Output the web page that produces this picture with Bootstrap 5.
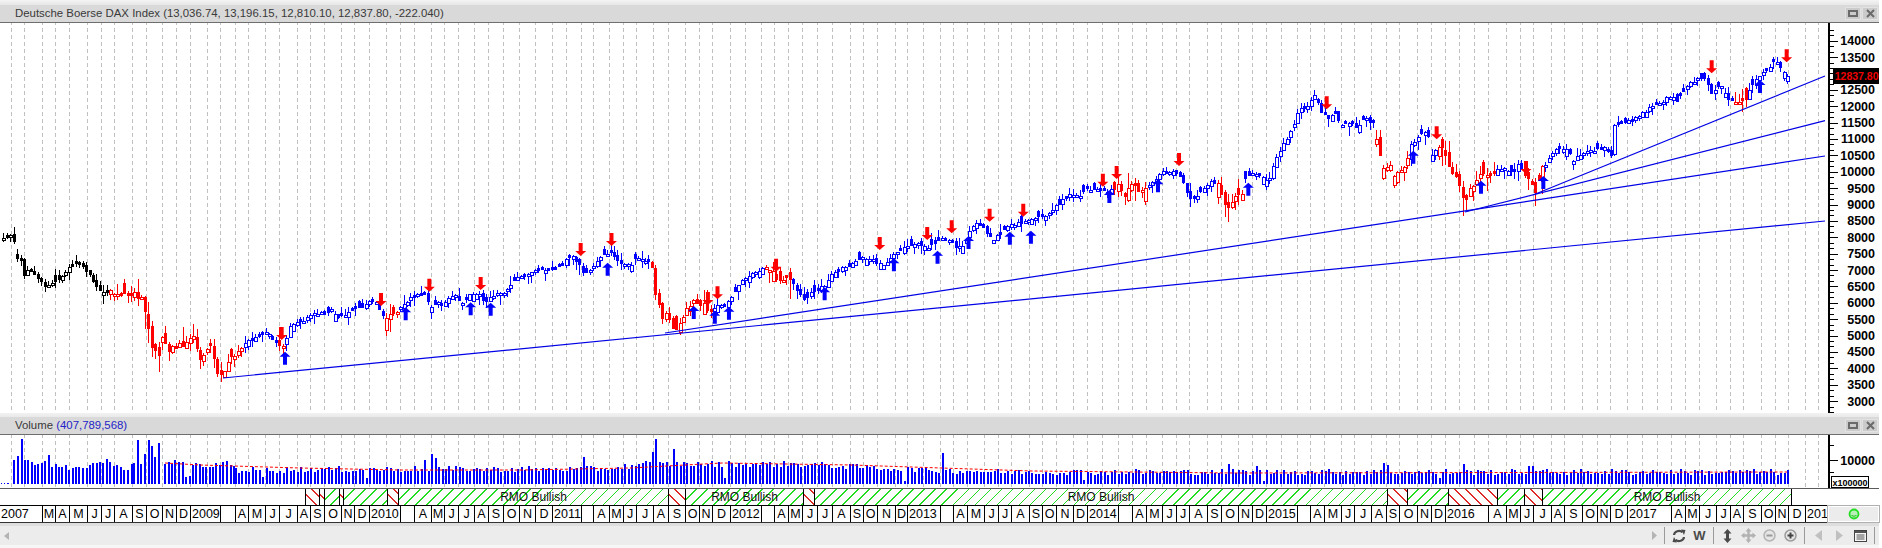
<!DOCTYPE html>
<html lang="en">
<head>
<meta charset="utf-8">
<title>Deutsche Boerse DAX Index</title>
<link href="https://cdn.jsdelivr.net/npm/bootstrap@5.3.0/dist/css/bootstrap.min.css" rel="stylesheet">
<style>
html,body{margin:0;background:#fff;overflow:hidden}
.app-shell{width:1879px;height:548px;font-family:"Liberation Sans",Arial,sans-serif;color:#000}
.top-strip{height:5px;background:linear-gradient(#f4f4f4,#e6e6e6)}
.mid-strip{height:4px;background:linear-gradient(#f2f2f2,#e9e9e9)}
.pane-title{height:18px;background:#d9d9d9;border-bottom:1px solid #6e6e6e;font-family:"Liberation Sans",Tahoma,sans-serif;font-size:11.4px;color:#3a3a3a;padding-left:15px;line-height:17px}
.pane-blue{color:#2424c8}
.win-btn{width:16px;height:13px;background:#cbcbcb;border:1px solid #e2e2e2;display:flex;align-items:center;justify-content:center}
.win-btns{gap:1px;padding-right:1px}
.plot{display:block}
.rmo-row{height:17px;border-top:1px solid #5a5a5a;background:#fff}
.rmo-seg{height:16px;border-left:1px solid #000;font-size:12px;line-height:16px;color:#111;overflow:hidden;flex:none;text-align:center}
.rmo-none{border-left:0}
.rmo-up{background:repeating-linear-gradient(135deg,transparent 0 6.8px,#22dd22 6.8px 7.8px)}
.rmo-down{background:repeating-linear-gradient(45deg,transparent 0 6.8px,#e02a2a 6.8px 7.8px)}
.mon-row{height:18px;border-top:1px solid #000;border-bottom:1px solid #333}
.mon-cell{flex:none;height:16px;border-left:1px solid #000;font-size:12.5px;line-height:16px;text-align:center;overflow:hidden;white-space:nowrap;color:#000}
.mon-cell:first-child{border-left:0}
.mon-year{text-align:left;padding-left:1px}
.mon-stat{flex:none;width:51px;height:16px;background:#ececec;border:1px solid #fff;outline:1px solid #b0b0b0;display:flex;align-items:center;justify-content:center}
.bot-strip{height:3px;background:#dedede}
.tool-row{height:19px;background:#ececec;padding-right:1px}
.tri-l{width:0;height:0;border:4px solid transparent;border-right:5px solid #b4b4b4;border-left:0;margin-left:1px}
.tool-sep{width:1px;height:17px;background:#9a9a9a;margin:0 3px;flex:none}
.tool-btn{width:21px;height:19px;flex:none;display:flex;align-items:center;justify-content:center;font-size:13px;font-weight:700;color:#4b4b4b}
.tool-tri{width:12px;flex:none;display:flex;justify-content:center}
.tail-strip{height:3px;background:#f6f6f6}
.ax-text{font-family:"Liberation Sans",Arial,sans-serif;font-size:12.5px;font-weight:700;fill:#000}
.tag-text{font-family:"Liberation Sans",Arial,sans-serif;font-size:10.5px;font-weight:700;fill:#f00000}
.mult-text{font-family:"Liberation Sans",Arial,sans-serif;font-size:9px;font-weight:700;fill:#000}
</style>
</head>
<body>
<div class="app-shell d-flex flex-column">
  <div class="top-strip"></div>
  <div class="pane-title d-flex justify-content-between align-items-center">
    <span>Deutsche Boerse DAX Index (13,036.74, 13,196.15, 12,810.10, 12,837.80, -222.040)</span>
    <div class="d-flex win-btns">
      <div class="win-btn"><svg width="10" height="7"><rect x="1" y="1" width="8" height="5" fill="none" stroke="#6a6a6a" stroke-width="2"/></svg></div>
      <div class="win-btn"><svg width="9" height="9"><path d="M1 1 8 8M8 1 1 8" stroke="#6a6a6a" stroke-width="2"/></svg></div>
    </div>
  </div>
  <svg id="mainPlot" class="plot" width="1879" height="390" viewBox="0 23 1879 390" xmlns="http://www.w3.org/2000/svg"></svg>
  <div class="mid-strip"></div>
  <div class="pane-title d-flex justify-content-between align-items-center">
    <span>Volume <span class="pane-blue">(407,789,568)</span></span>
    <div class="d-flex win-btns">
      <div class="win-btn"><svg width="10" height="7"><rect x="1" y="1" width="8" height="5" fill="none" stroke="#6a6a6a" stroke-width="2"/></svg></div>
      <div class="win-btn"><svg width="9" height="9"><path d="M1 1 8 8M8 1 1 8" stroke="#6a6a6a" stroke-width="2"/></svg></div>
    </div>
  </div>
  <svg id="volPlot" class="plot" width="1879" height="53" viewBox="0 435 1879 53" xmlns="http://www.w3.org/2000/svg"></svg>
  <div id="rmoRow" class="rmo-row d-flex"></div>
  <div id="monRow" class="mon-row d-flex"></div>
  <div class="bot-strip"></div>
  <div class="tool-row d-flex align-items-center">
    <div class="tool-tri"><div class="tri-l"></div></div>
    <div class="flex-grow-1"></div>
    <div class="tool-tri"><svg width="6" height="9"><path d="M0 0 5 4.500 0 9Z" fill="#b4b4b4"/></svg></div>
    <div class="tool-sep"></div>
    <div class="tool-btn"><svg width="14" height="14" viewBox="0 0 14 14"><path d="M2 6A5 4.500 0 0 1 10.500 3.200M12 8A5 4.500 0 0 1 3.500 10.800" fill="none" stroke="#4a4a4a" stroke-width="2.200"/><path d="M9 0.500 13.500 1 12 6ZM5 13.500.500 13 2 8Z" fill="#4a4a4a"/></svg></div>
    <div class="tool-btn">W</div>
    <div class="tool-sep"></div>
    <div class="tool-btn"><svg width="9" height="14" viewBox="0 0 9 14"><path d="M4.500 0 8.500 4.500H6V9.500H8.500L4.500 14 .5 9.500H3V4.500H.5Z" fill="#4a4a4a"/></svg></div>
    <div class="tool-btn"><svg width="15" height="15" viewBox="0 0 15 15"><path d="M7.500 0 10.500 3.500H8.700V6.300H11.500V4.500L15 7.500 11.500 10.500V8.700H8.700V11.500H10.500L7.500 15 4.500 11.500H6.300V8.700H3.500V10.500L0 7.500 3.500 4.500V6.300H6.300V3.500H4.500Z" fill="#b2b2b2"/></svg></div>
    <div class="tool-btn"><svg width="13" height="13" viewBox="0 0 13 13"><circle cx="6.500" cy="6.500" r="5.500" fill="#e6e6e6" stroke="#b4b4b4" stroke-width="1.500"/><rect x="3.500" y="5.500" width="6" height="2" fill="#9a9a9a"/></svg></div>
    <div class="tool-btn"><svg width="13" height="13" viewBox="0 0 13 13"><circle cx="6.500" cy="6.500" r="5.500" fill="#e6e6e6" stroke="#9c9c9c" stroke-width="1.500"/><path d="M3.500 5.500H5.500V3.500H7.500V5.500H9.500V7.500H7.500V9.500H5.500V7.500H3.500Z" fill="#444"/></svg></div>
    <div class="tool-sep"></div>
    <div class="tool-btn"><svg width="7" height="11"><path d="M7 0 0 5.500 7 11Z" fill="#c0c0c0"/></svg></div>
    <div class="tool-btn"><svg width="7" height="11"><path d="M0 0 7 5.500 0 11Z" fill="#c0c0c0"/></svg></div>
    <div class="tool-btn"><svg width="13" height="12" viewBox="0 0 13 12"><rect x=".5" y=".5" width="12" height="11" fill="#f6f6f6" stroke="#444"/><rect x="1" y="1" width="11" height="2" fill="#555"/><path d="M2.500 5H10.500M2.500 7H10.500M2.500 9H10.500" stroke="#555"/></svg></div>
    <div class="tool-sep"></div>
  </div>
  <div class="tail-strip"></div>
</div>
<script>
(function(){
  var NS='http://www.w3.org/2000/svg';
  function tf(list,ox,oy,sx,sy){return list.map(function(p){return [ox+p[0]*sx,oy+p[1]*sy];});}
  var z1=tf([[0,708],[10,712],[22,705],[30,712],[37,735],[42,770],[53,785],[60,825],[70,810],[85,820],[100,840],[112,860],[125,855],[140,840],[155,825],[172,805],[190,790],[205,800],[218,815],[235,850],[250,875]],0,0,.402,1/3);
  var z9=tf([[0,275],[40,262],[60,265],[90,280],[105,285],[125,290],[133,318],[146,390],[150,430],[165,450],[175,470],[185,405],[195,420],[205,460],[218,445],[228,440],[245,430],[262,432],[275,405],[290,450],[300,470],[315,450],[332,440],[342,480],[350,510],[365,525],[382,490],[405,465],[425,440],[440,425],[458,418],[475,410],[495,395],[510,405],[530,425],[550,440],[560,410],[570,380],[590,365],[605,365],[625,352],[645,340],[675,340],[695,330],[715,355],[735,345],[760,325],[790,315],[812,303],[830,305],[840,335],[858,350],[880,340],[905,320],[930,295],[950,282],[975,280],[992,320],[1008,310],[1025,315],[1045,295],[1062,280],[1075,305],[1090,310],[1100,290],[1120,283],[1137,280],[1145,300],[1165,300],[1190,280],[1215,280],[1232,250],[1255,232],[1285,225],[1305,210],[1330,205],[1355,210],[1385,195],[1400,175],[1420,170],[1435,185],[1445,200],[1452,225],[1470,210],[1490,185]],100,200,1/3,1/3).slice(3);
  var z8=tf([[15,280],[25,270],[40,295],[50,305],[65,315],[80,315],[95,290],[115,300],[135,300],[140,395],[150,415],[160,470],[175,465],[185,495],[200,510],[220,465],[240,420],[255,430],[275,425],[285,460],[305,440],[325,435],[340,420],[355,385],[370,360],[390,345],[410,335],[430,315],[450,335],[470,360],[490,350],[510,380],[530,420],[550,400],[570,390],[590,370],[605,345],[630,325],[655,310],[680,290],[710,295],[740,320],[760,295],[775,275],[800,255],[830,252],[855,260],[880,240],[910,235],[925,255],[945,265],[965,210],[985,190],[1005,205],[1025,240],[1045,220],[1070,190],[1100,190],[1125,180],[1145,165],[1165,170],[1185,145],[1205,120],[1230,100],[1250,110],[1270,85],[1310,90],[1330,95],[1350,75],[1370,105],[1390,65],[1410,90],[1440,70],[1470,35],[1500,35],[1520,50],[1535,100],[1550,120]],600,160,.3827,1/3);
  var z7=tf([[0,395],[15,380],[35,360],[55,370],[60,395],[75,430],[85,440],[105,405],[130,400],[135,360],[155,335],[175,350],[205,360],[218,320],[240,270],[255,240],[275,210],[295,150],[320,140],[345,100],[360,150],[385,170],[405,155],[420,190],[450,190],[475,200],[490,170],[520,190],[530,230],[548,320],[570,320],[585,350],[605,325],[620,320],[628,255],[650,235],[680,205],[695,285],[715,265],[730,260],[745,320],[765,350],[785,395],[795,430],[810,390],[830,350],[860,345],[885,330],[905,320],[925,335],[945,335],[955,305],[975,345],[990,350],[1005,395],[1025,325],[1045,300],[1065,265],[1100,265],[1120,300],[1150,275],[1185,270],[1215,260],[1235,285],[1242,195],[1260,190],[1300,178],[1320,160],[1355,140],[1380,130],[1405,105],[1430,125],[1445,100],[1470,65],[1500,55]],1200,60,1/3,1/3);
  var z2=tf([[620,240],[635,280],[660,255],[680,295],[700,305],[720,300],[738,300],[745,270],[765,240],[785,222],[810,205],[825,172],[840,205],[862,225]],1500,0,1/3,1/3);
  var path=z1.concat(z9,z8,z7,z2).sort(function(a,b){return a[0]-b[0];});
  function interp(x,arr){
    if(x<=arr[0][0])return arr[0][1];
    for(var i=1;i<arr.length;i++){if(x<=arr[i][0]){var a=arr[i-1],b=arr[i];return a[1]+(b[1]-a[1])*(x-a[0])/Math.max(.001,b[0]-a[0]);}}
    return arr[arr.length-1][1];
  }
  var seed=12345;
  function rnd(){seed=(seed*1103515245+12345)&0x7fffffff;return seed/0x7fffffff;}

  var redRanges=[[108,243],[278,286],[383,398],[649,712],[763,793],[1112,1146],[1217,1243],[1373,1408],[1437,1497],[1522,1543],[1732,1749]];
  function colorAt(x){
    if(x<108)return '#000000';
    for(var i=0;i<redRanges.length;i++){if(x>=redRanges[i][0]&&x<=redRanges[i][1])return '#ff0000';}
    return '#0000ff';
  }
  var step=3.45,last=1787,bars=[];
  for(var x=last;x>=0;x-=step){bars.unshift(x);}

  var cells=[['2007',0],['M',42],['A',55],['M',69],['J',87],['J',100.5],['A',114],['S',131.5],['O',145.5],['N',161.6],['D',175.7],['2009',190],['',220],['A',235],['M',248],['J',265],['J',279],['A',297],['S',310],['O',324],['N',340.5],['D',354],['2010',369],['',400],['A',414],['M',431],['J',444],['J',458],['A',474],['S',488.4],['O',502.5],['N',519.4],['D',534.7],['2011',551.5],['',581],['A',593],['M',609],['J',623],['J',636],['A',653.3],['S',668.2],['O',685],['N',699],['D',711.6],['2012',729.7],['',760.7],['A',774],['M',788],['J',801.7],['J',817],['A',832],['S',850],['O',863],['N',877],['D',895],['2013',907.4],['',939.5],['A',952.8],['M',967],['J',983.8],['J',997.8],['A',1010.7],['S',1028.8],['O',1042],['N',1056],['D',1073.4],['2014',1087],['',1118],['A',1132],['M',1146],['J',1162],['J',1175.7],['A',1189.3],['S',1206.7],['O',1220.7],['N',1237.7],['D',1251.7],['2015',1265.7],['',1296.7],['A',1310],['M',1324],['J',1340.7],['J',1354.3],['A',1371],['S',1385.7],['O',1399.3],['N',1416.7],['D',1430.7],['2016',1445],['A',1488.3],['M',1506],['J',1520],['J',1533.3],['A',1550.7],['S',1564],['O',1582],['N',1597],['D',1610],['2017',1627],['A',1671],['M',1685],['J',1699],['J',1716],['A',1730],['S',1743],['O',1761],['N',1775],['D',1788],['2018',1805]];
  cells.forEach(function(c){c[1]=Math.round(c[1]);});
  var dashes=[11,24,207,386,566,745,923,1102,1281,1459,1474,1642,1657,1818];
  cells.forEach(function(c){if(c[1]>0)dashes.push(c[1]);});
  var dashPath=dashes.map(function(d){return 'M'+(d+.5)+' 0V600';}).join('');

  function el(parent,tag,attrs,text){var e=document.createElementNS(NS,tag);for(var k in attrs)e.setAttribute(k,attrs[k]);if(text!=null)e.textContent=text;parent.appendChild(e);return e;}

  var m=document.getElementById('mainPlot');
  el(m,'rect',{x:0,y:23,width:1879,height:390,fill:'#fff'});
  el(m,'path',{d:dashPath,stroke:'#c0c0c0','stroke-width':1,'stroke-dasharray':'4 3','shape-rendering':'crispEdges',fill:'none'});
  var byCol={};
  function col(c){if(!byCol[c])byCol[c]={wick:'',fill:'',hollow:''};return byCol[c];}
  var prev=interp(bars[0],path);
  bars.forEach(function(x){
    var c=colorAt(x),g=col(c);
    var vol=(c==='#ff0000')?2:1;
    var close=interp(x,path)+(rnd()-.5)*3*vol;
    var open=prev+(rnd()-.5)*3*vol;
    if(rnd()<.3){open=close+(rnd()<.5?-1:1)*(2+rnd()*5)*vol;}
    if(Math.abs(open-close)<2){open=close+(rnd()<.5?-2:2);}
    var top=Math.min(open,close),bot=Math.max(open,close);
    var hi=top-rnd()*rnd()*9*vol-.5,lo=bot+rnd()*rnd()*11*vol+.5;
    var px=Math.round(x);
    g.wick+='M'+(px+.5)+' '+Math.round(hi)+'V'+Math.round(lo);
    var t=Math.round(top),b=Math.round(bot);
    if(close<open){g.hollow+='M'+(px-.5)+' '+(t+.5)+'H'+(px+2.5)+'V'+(b+.5)+'H'+(px-.5)+'Z';}
    else{g.fill+='M'+(px-1)+' '+t+'H'+(px+2)+'V'+(b+1)+'H'+(px-1)+'Z';}
    prev=close;
  });
  Object.keys(byCol).forEach(function(c){
    var g=byCol[c];
    el(m,'path',{d:g.wick,stroke:c,fill:'none','shape-rendering':'crispEdges'});
    el(m,'path',{d:g.hollow,stroke:c,fill:'#fff','shape-rendering':'crispEdges'});
    el(m,'path',{d:g.fill,fill:c,'shape-rendering':'crispEdges'});
  });
  [[223,378,1825,221],[665,333,1825,156],[1465,212,1825,120.7],[1533,195,1825,76]].forEach(function(l){
    el(m,'line',{x1:l[0],y1:l[1],x2:l[2],y2:l[3],stroke:'#0000e6','stroke-width':1.2});
  });
  function down(x,y){el(m,'path',{d:'M'+(x-2)+' '+(y-13)+'H'+(x+2)+'V'+(y-5)+'H'+(x+5.5)+'L'+x+' '+y+'L'+(x-5.5)+' '+(y-5)+'H'+(x-2)+'Z',fill:'#ff0000'});}
  function up(x,y){el(m,'path',{d:'M'+(x-2)+' '+(y+13)+'H'+(x+2)+'V'+(y+5)+'H'+(x+5.5)+'L'+x+' '+y+'L'+(x-5.5)+' '+(y+5)+'H'+(x-2)+'Z',fill:'#0000ff'});}
  tf([[545,420],[843,318],[988,275],[1142,270],[1442,168]],100,200,1/3,1/3).forEach(function(p){down(p[0],p[1]);});
  tf([[555,455],[917,322],[1112,307],[1172,308]],100,200,1/3,1/3).forEach(function(p){up(p[0],p[1]);});
  tf([[30,258],[282,435],[307,418],[460,335],[731,270],[855,240],[919,220],[1018,185],[1106,170],[1314,80],[1350,57],[1513,18]],600,160,.3827,1/3).forEach(function(p){down(p[0],p[1]);});
  tf([[20,308],[245,438],[300,452],[337,440],[587,382],[768,295],[882,272],[963,228],[1071,215],[1126,212],[1331,90],[1458,58]],600,160,.3827,1/3).forEach(function(p){up(p[0],p[1]);});
  tf([[380,148],[710,238],[978,342]],1200,60,1/3,1/3).forEach(function(p){down(p[0],p[1]);});
  tf([[145,368],[640,272],[843,362],[1030,348]],1200,60,1/3,1/3).forEach(function(p){up(p[0],p[1]);});
  tf([[635,220],[860,187]],1500,0,1/3,1/3).forEach(function(p){down(p[0],p[1]);});
  tf([[780,240]],1500,0,1/3,1/3).forEach(function(p){up(p[0],p[1]);});
  var ax='';
  var y0=40.7,perStep=16.38;
  for(var i=-2;i<=70;i++){
    var yy=y0+i*perStep/3;
    if(yy<24||yy>412)continue;
    var major=((i%3)+3)%3===0;
    ax+='M1829 '+(Math.round(yy)+.5)+'H'+(major?1838:1834);
  }
  el(m,'path',{d:ax,stroke:'#000','stroke-width':1,fill:'none','shape-rendering':'crispEdges'});
  el(m,'rect',{x:1828,y:23,width:2,height:390,fill:'#000'});
  for(var p=14000,k=0;p>=3000;p-=500,k++){
    if(p===13000)continue;
    el(m,'text',{x:1875,y:y0+k*perStep+4.5,'text-anchor':'end','class':'ax-text'},String(p));
  }
  el(m,'rect',{x:1833,y:68,width:46,height:16,fill:'#000'});
  el(m,'text',{x:1878.500,y:80,'text-anchor':'end','class':'tag-text'},'12837.80');

  var v=document.getElementById('volPlot');
  el(v,'rect',{x:0,y:435,width:1879,height:53,fill:'#fff'});
  el(v,'path',{d:dashPath,stroke:'#c0c0c0','stroke-width':1,'stroke-dasharray':'4 3','shape-rendering':'crispEdges',fill:'none'});
  var early=[[33,180],[42,168],[52,117],[60,180],[68,180],[77,187],[85,195],[93,192],[102,188],[110,183],[119,165],[127,200],[136,192],[144,200],[152,200],[161,195],[170,210],[178,205],[187,200],[195,200],[204,203],[213,203],[221,195],[230,188],[238,190],[246,185],[254,188],[263,177],[272,185],[280,197],[289,195],[298,200],[306,210],[315,210],[325,192],[332,188],[340,120],[349,192],[358,162],[367,120],[375,138],[383,172],[392,128],[408,192],[418,185],[426,192],[434,180],[442,187],[452,185],[461,232],[469,228],[477,195],[486,190],[494,193],[503,200],[511,200],[520,200],[528,200],[536,190],[545,195],[553,187],[562,183],[571,195],[579,197]];
  var vp='';
  function vbar(x,top){var px=Math.round(x),t=Math.round(top);vp+='M'+px+' '+t+'H'+(px+2)+'V484H'+px+'Z';}
  early.forEach(function(b){vbar(b[0]*.402,400+b[1]/3);});
  [1,4,7,8].forEach(function(x){vp+='M'+x+' 483H'+(x+1)+'V484H'+x+'Z';});
  var baseH=[[240,14],[420,15],[600,15],[650,20],[800,20],[900,15],[1000,12],[1787,12]];
  var spikes={};
  [[430,162],[423,180],[434,175],[584,172],[656,117],[652,155],[674,148],[645,182],[941,160],[724,235],[905,243],[1084,240],[1227,192],[1257,197],[1261,243],[1382,190],[1387,195],[1463,192],[1440,235],[1528,198],[1532,198],[263,232],[366,235]].forEach(function(s){spikes[Math.round((1787-s[0])/step)]=400+s[1]/3;});
  var startK=Math.floor((1787-234)/step);
  for(var kk=startK;kk>=0;kk--){
    var bx=1787-kk*step;
    var top=spikes[kk]||484-(interp(bx,baseH)+(rnd()-.5)*6);
    vbar(bx,top);
  }
  el(v,'path',{d:vp,fill:'#0000ff','shape-rendering':'crispEdges'});
  var ma=[[165,463],[200,465],[300,468],[400,470],[522,470],[630,468],[722,463],[851,465],[911,467],[1032,471],[1233,473],[1787,472]];
  el(v,'polyline',{points:ma.map(function(q){return q.join(',');}).join(' '),fill:'none',stroke:'#ff0000','stroke-width':1,'stroke-dasharray':'3 2'});
  var vax='';
  [445,460,472].forEach(function(t,i){vax+='M1829 '+(t+.5)+'H'+(i===1?1838:1834);});
  el(v,'path',{d:vax,stroke:'#000',fill:'none','shape-rendering':'crispEdges'});
  el(v,'rect',{x:1828,y:435,width:2,height:53,fill:'#000'});
  el(v,'text',{x:1875,y:464.500,'text-anchor':'end','class':'ax-text'},'10000');
  el(v,'rect',{x:1831.500,y:476.500,width:37,height:11,fill:'#fff',stroke:'#000'});
  el(v,'text',{x:1832.500,y:485.500,'class':'mult-text'},'x100000');

  var segs=[[0,305,''],[305,319,'d'],[319,324,'d'],[324,339,'u'],[339,343,'d'],[343,387,'u'],[387,398,'d'],[398,668,'u','RMO Bullish'],[668,685,'d'],[685,803,'u','RMO Bullish'],[803,814,'d'],[814,1387,'u','RMO Bullish'],[1387,1407,'d'],[1407,1448,'u'],[1448,1497,'d'],[1497,1524,'u'],[1524,1542,'d'],[1542,1791,'u','RMO Bullish']];
  var rr=document.getElementById('rmoRow');
  segs.forEach(function(s){
    var d=document.createElement('div');
    d.className='rmo-seg '+(s[2]==='u'?'rmo-up':s[2]==='d'?'rmo-down':'rmo-none');
    d.style.width=(s[1]-s[0])+'px';
    if(s[3])d.textContent=s[3];
    rr.appendChild(d);
  });
  var endLine=document.createElement('div');endLine.className='rmo-seg';endLine.style.width='1px';rr.appendChild(endLine);

  var mr=document.getElementById('monRow');
  cells.forEach(function(c,i){
    var next=i+1<cells.length?cells[i+1][1]:1828;
    var d=document.createElement('div');
    d.className='mon-cell'+(c[0].length>1?' mon-year':'');
    d.style.width=(next-c[1])+'px';
    d.textContent=c[0];
    mr.appendChild(d);
  });
  var st=document.createElement('div');st.className='mon-stat';
  st.innerHTML='<svg width="12" height="12" viewBox="0 0 12 12"><circle cx="6" cy="6" r="4.500" fill="#b8f0b8" stroke="#22dd22" stroke-width="1.800"/><path d="M3.500 7.500Q6 9 8.500 7.500" stroke="#22bb22" fill="none"/></svg>';
  mr.appendChild(st);
})();
</script>
<script src="https://cdn.jsdelivr.net/npm/bootstrap@5.3.0/dist/js/bootstrap.bundle.min.js"></script>
</body>
</html>
